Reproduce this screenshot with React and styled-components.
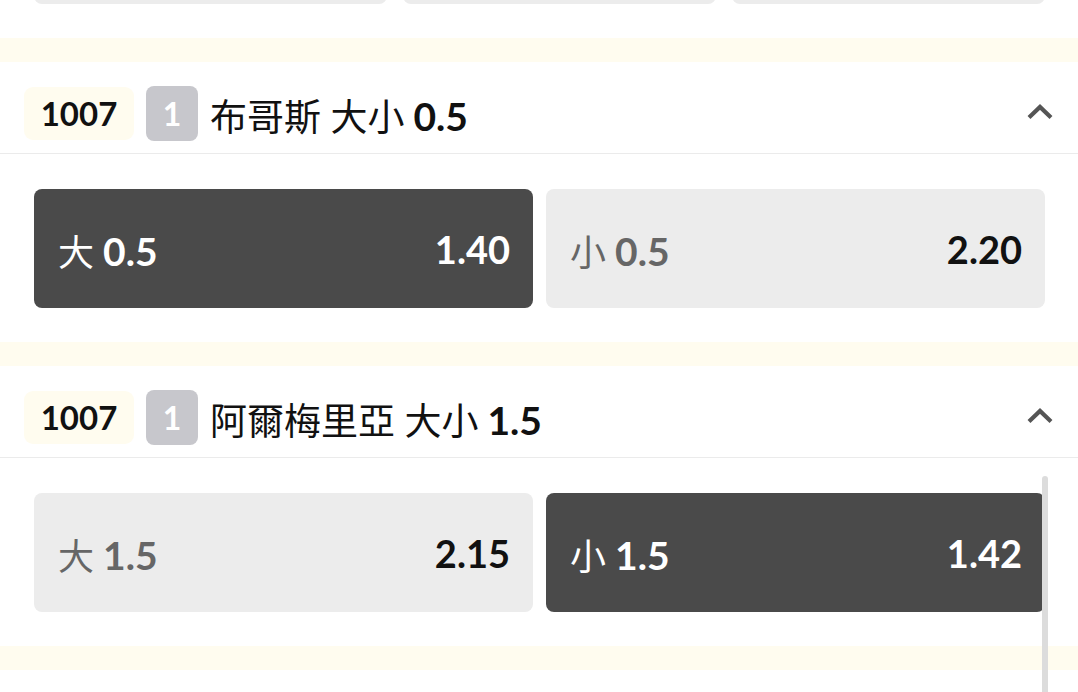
import React from "react";
import styled, { createGlobalStyle } from "styled-components";

const GlobalStyle = createGlobalStyle`
  html, body { margin: 0; padding: 0; background: #ffffff; }
  body {
    font-family: Lato, "Noto Sans CJK TC", "Noto Sans", sans-serif;
    color: #111;
    -webkit-font-smoothing: antialiased;
  }
  * { box-sizing: border-box; }
`;

const Page = styled.div`
  position: relative;
  width: 1078px;
  height: 692px;
  overflow: hidden;
  background: #fff;
`;

const Separator = styled.div`
  height: 24px;
  background: #fffcef;
`;

const Body = styled.div`
  padding: ${(p) => (p.$partial ? "0" : "35px")} 33px 34px 34px;
`;

const OptionGrid = styled.div`
  display: grid;
  grid-template-columns: ${(p) => p.$cols};
  gap: ${(p) => p.$gap}px;
  margin-top: ${(p) => p.$offset || 0}px;
`;

const Option = styled.div`
  height: 119px;
  border-radius: 8px;
  padding: 0 23px 0 24px;
  display: flex;
  align-items: center;
  justify-content: space-between;
  background: ${(p) => (p.$active ? "#4a4a4a" : "#ececec")};
  color: ${(p) => (p.$active ? "#ffffff" : "#111111")};
`;

const OptionLabel = styled.span`
  font-size: 36px;
  font-weight: 400;
  color: ${(p) => (p.$active ? "#ffffff" : "#666666")};
  display: flex;
  align-items: baseline;
  gap: 9px;
  margin-top: 2px;
`;

const Line = styled.span`
  font-size: 39px;
  font-weight: 700;
`;

const Odds = styled.span`
  font-size: 38px;
  font-weight: 700;
`;

const Header = styled.div`
  height: 92px;
  border-bottom: 1px solid #ebebeb;
  padding: 11px 25px 0 24px;
  display: flex;
  align-items: center;
`;

const MatchNo = styled.span`
  height: 53px;
  width: 110px;
  border-radius: 9px;
  background: #fffcef;
  display: inline-flex;
  align-items: center;
  justify-content: center;
  font-size: 33px;
  font-weight: 700;
  color: #111;
`;

const Seq = styled.span`
  width: 52px;
  height: 55px;
  margin-left: 12px;
  border-radius: 8px;
  background: #c7c7cc;
  color: #fff;
  display: inline-flex;
  align-items: center;
  justify-content: center;
  font-size: 32px;
  font-weight: 700;
`;

const Title = styled.span`
  margin-left: 12px;
  font-size: 37px;
  font-weight: 400;
  color: #111;
  flex: 1;
  display: flex;
  align-items: baseline;
  gap: 9px;
  margin-top: 4px;
`;

const Toggle = styled.span`
  width: 26px;
  height: 16px;
  display: inline-flex;
  margin-top: -3px;
`;

const Scrollbar = styled.div`
  position: absolute;
  left: 1042px;
  top: 476px;
  width: 6px;
  height: 240px;
  border-radius: 3px;
  background: #dcdcdc;
`;

const Chevron = () => (
  <Toggle>
    <svg width="26" height="16" viewBox="0 0 26 16">
      <polyline
        points="2,13.5 13,3 24,13.5"
        fill="none"
        stroke="#555"
        strokeWidth="4.2"
        strokeLinejoin="miter"
      />
    </svg>
  </Toggle>
);

const markets = [
  {
    no: "1007",
    seq: "1",
    name: "布哥斯 大小",
    line: "0.5",
    options: [
      { side: "大", line: "0.5", odds: "1.40", active: true },
      { side: "小", line: "0.5", odds: "2.20", active: false },
    ],
  },
  {
    no: "1007",
    seq: "1",
    name: "阿爾梅里亞 大小",
    line: "1.5",
    options: [
      { side: "大", line: "1.5", odds: "2.15", active: false },
      { side: "小", line: "1.5", odds: "1.42", active: true },
    ],
  },
];

const MarketOption = ({ side, line, odds, active }) => (
  <Option $active={active}>
    <OptionLabel $active={active}>
      <span>{side}</span>
      <Line>{line}</Line>
    </OptionLabel>
    <Odds>{odds}</Odds>
  </Option>
);

export default function App() {
  return (
    <>
      <GlobalStyle />
      <Page>
        <Body $partial>
          <OptionGrid $cols="353fr 312fr 313fr" $gap={16} $offset={-115}>
            <Option />
            <Option />
            <Option />
          </OptionGrid>
        </Body>
        {markets.map((m, i) => (
          <React.Fragment key={i}>
            <Separator />
            <Header>
              <MatchNo>{m.no}</MatchNo>
              <Seq>{m.seq}</Seq>
              <Title>
                <span>{m.name}</span>
                <Line>{m.line}</Line>
              </Title>
              <Chevron />
            </Header>
            <Body>
              <OptionGrid $cols="1fr 1fr" $gap={13}>
                {m.options.map((o, j) => (
                  <MarketOption key={j} {...o} />
                ))}
              </OptionGrid>
            </Body>
          </React.Fragment>
        ))}
        <Separator />
        <Header />
        <Scrollbar />
      </Page>
    </>
  );
}
